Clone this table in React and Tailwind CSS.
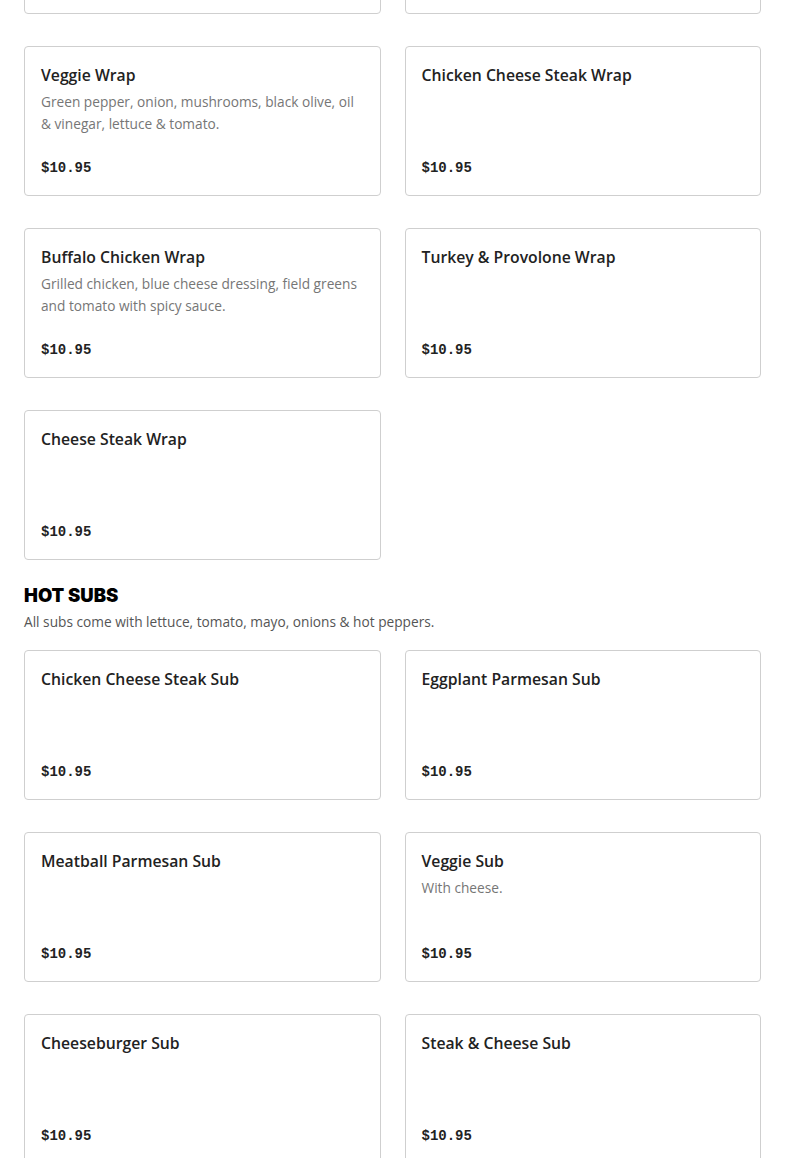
import React from "react";

const wraps = [
  { name: "Veggie Wrap", desc: "Green pepper, onion, mushrooms, black olive, oil & vinegar, lettuce & tomato.", price: "$10.95" },
  { name: "Chicken Cheese Steak Wrap", desc: "", price: "$10.95" },
  { name: "Buffalo Chicken Wrap", desc: "Grilled chicken, blue cheese dressing, field greens and tomato with spicy sauce.", price: "$10.95" },
  { name: "Turkey & Provolone Wrap", desc: "", price: "$10.95" },
  { name: "Cheese Steak Wrap", desc: "", price: "$10.95" },
];

const hotSubs = [
  { name: "Chicken Cheese Steak Sub", desc: "", price: "$10.95" },
  { name: "Eggplant Parmesan Sub", desc: "", price: "$10.95" },
  { name: "Meatball Parmesan Sub", desc: "", price: "$10.95" },
  { name: "Veggie Sub", desc: "With cheese.", price: "$10.95" },
  { name: "Cheeseburger Sub", desc: "", price: "$10.95" },
  { name: "Steak & Cheese Sub", desc: "", price: "$10.95" },
];

function MenuCard({ item }) {
  return (
    <div className="h-[150px] border border-[#cfcfcf] rounded-[4px] bg-white px-4 pt-4 pb-[17px] flex flex-col">
      <h3 className="text-[15.75px] leading-6 font-semibold text-[#222]">{item.name}</h3>
      {item.desc && (
        <p className="mt-1 text-[13.7px] leading-[22px] text-[#767676]">{item.desc}</p>
      )}
      <div className="mt-auto text-[14px] leading-5 font-bold text-[#222] font-['Liberation_Mono',monospace]">
        {item.price}
      </div>
    </div>
  );
}

export default function App() {
  return (
    <div className="min-h-screen bg-white overflow-hidden font-['Open_Sans','Liberation_Sans',sans-serif]">
      <div className="px-6">
        {/* bottom edge of the previous row, scrolled out of view */}
        <div className="-mt-[136px] grid grid-cols-2 gap-x-6">
          <div className="h-[150px] border border-[#cfcfcf] rounded-[4px] bg-white" />
          <div className="h-[150px] border border-[#cfcfcf] rounded-[4px] bg-white" />
        </div>

        {/* Wraps */}
        <div className="mt-8 grid grid-cols-2 gap-x-6 gap-y-8">
          {wraps.map((item, i) => (
            <MenuCard key={i} item={item} />
          ))}
        </div>

        {/* Hot subs */}
        <div className="mt-[21px]">
          <h2 className="text-[18.5px] leading-7 font-black text-black font-['Inter','Liberation_Sans',sans-serif]">
            HOT SUBS
          </h2>
          <p className="mt-[3px] text-[13.7px] leading-5 text-[#555]">
            All subs come with lettuce, tomato, mayo, onions &amp; hot peppers.
          </p>
        </div>
        <div className="mt-[18px] grid grid-cols-2 gap-x-6 gap-y-8 pb-8">
          {hotSubs.map((item, i) => (
            <MenuCard key={i} item={item} />
          ))}
        </div>
      </div>
    </div>
  );
}
